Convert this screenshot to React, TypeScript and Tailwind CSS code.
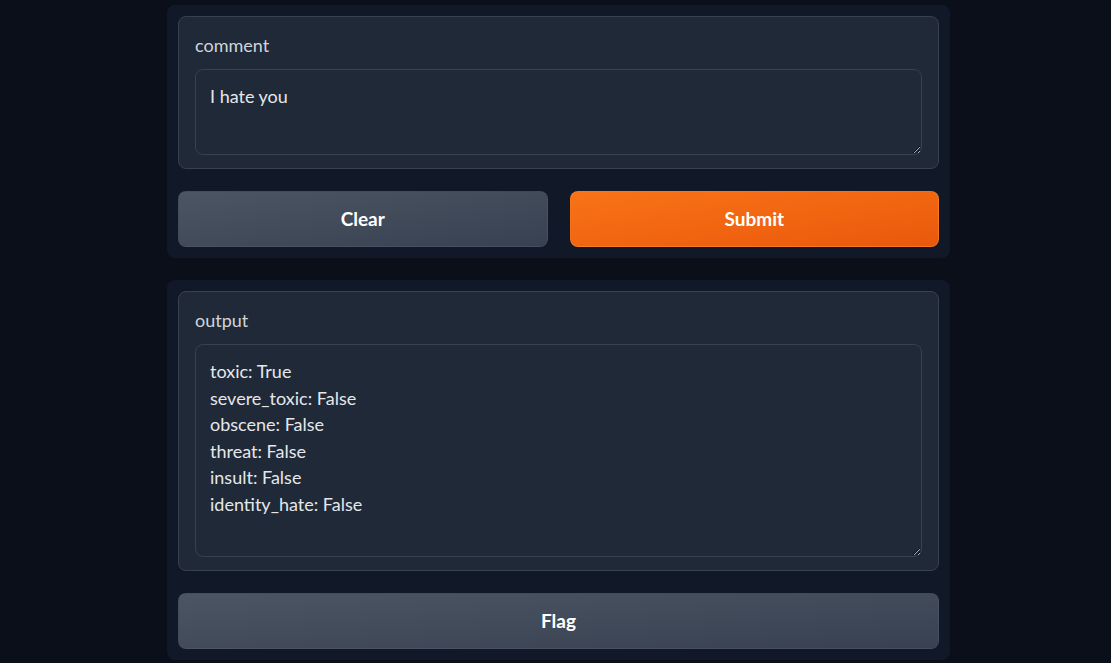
import React from 'react';

const font = { fontFamily: 'Lato, "Liberation Sans", sans-serif' };

const Field: React.FC<{ label: string; value: string; rows: string }> = ({ label, value, rows }) => (
  <div className="rounded-lg border border-[#374151] bg-[#1f2937] px-4 pt-[16px] pb-[13px]">
    <div className="h-[24px] text-[18px] leading-[24px] text-[#d1d5db]">{label}</div>
    <textarea
      readOnly
      value={value}
      className={`mt-[12px] block w-full resize-y rounded-lg border border-[#374151] bg-[#1f2937] px-[14px] pt-[13px] text-[18px] leading-[26.5px] text-[#e5e7eb] outline-none [color-scheme:dark] ${rows}`}
      style={font}
    />
  </div>
);

const App: React.FC = () => {
  return (
    <div className="min-h-[663px] bg-[#0b0f19] pt-[5px]" style={font}>
      <div className="ml-[167px] flex w-[783px] flex-col gap-[22px]">
        {/* input panel */}
        <div className="flex flex-col gap-[22px] rounded-lg bg-[#111827] p-[11px]">
          <Field label="comment" value="I hate you" rows="h-[86px]" />
          <div className="grid grid-cols-2 gap-[22px]">
            <button className="h-[56px] rounded-lg border border-[#4b5563]/40 bg-gradient-to-br from-[#4b5563] to-[#374151] text-[19px] font-bold text-white">
              Clear
            </button>
            <button className="h-[56px] rounded-lg border border-[#fb923c]/40 bg-gradient-to-br from-[#f97316] to-[#ea580c] text-[19px] font-bold text-white">
              Submit
            </button>
          </div>
        </div>

        {/* output panel */}
        <div className="flex flex-col gap-[22px] rounded-lg bg-[#111827] p-[11px]">
          <Field
            label="output"
            value={'toxic: True\nsevere_toxic: False\nobscene: False\nthreat: False\ninsult: False\nidentity_hate: False'}
            rows="h-[213px]"
          />
          <button className="h-[56px] rounded-lg border border-[#4b5563]/40 bg-gradient-to-br from-[#4b5563] to-[#374151] text-[19px] font-bold text-white">
            Flag
          </button>
        </div>
      </div>
    </div>
  );
};

export default App;
